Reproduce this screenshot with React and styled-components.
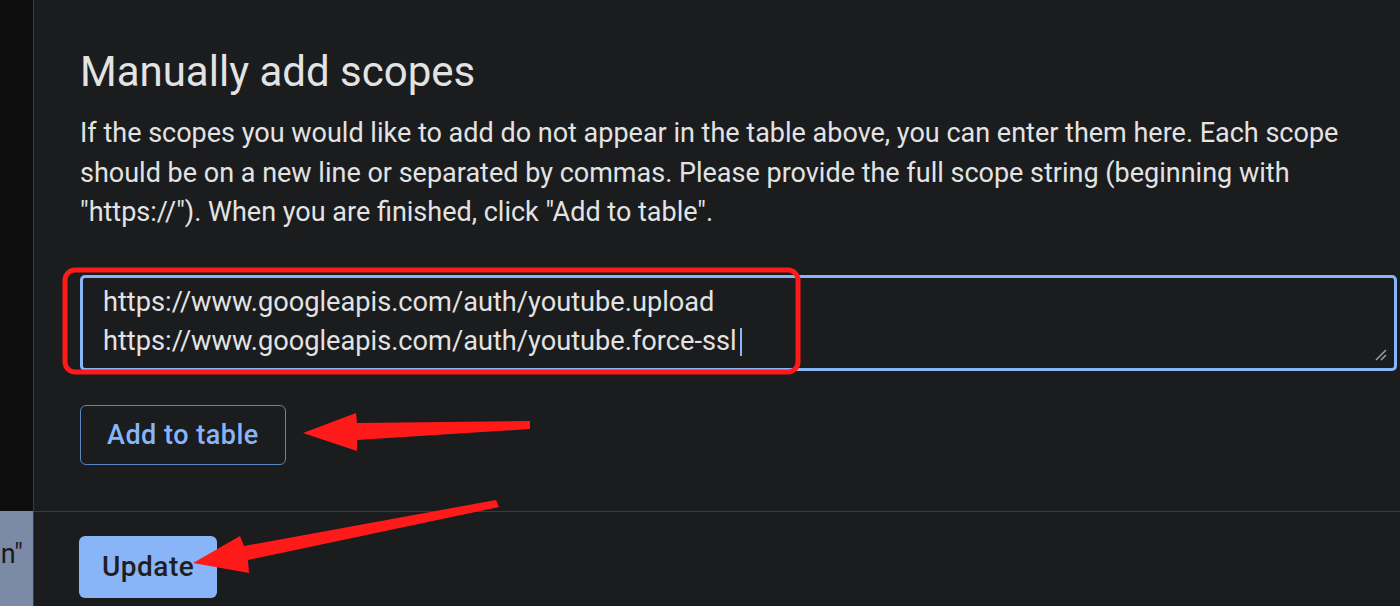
import styled, { createGlobalStyle } from "styled-components";

const Global = createGlobalStyle`
  html, body { margin: 0; padding: 0; background: #1b1c1e; }
  body { font-family: Roboto, "Noto Sans", sans-serif; }
`;

export default function App() {
  return (
    <>
      <Global />
      <Page>
        <Side>
          <SideChip>n"</SideChip>
        </Side>
        <Main>
          <Section>
            <Title>Manually add scopes</Title>
            <Text>
              If the scopes you would like to add do not appear in the table above, you can enter them here. Each scope<br />
              should be on a new line or separated by commas. Please provide the full scope string (beginning with<br />
              "https://"). When you are finished, click "Add to table".
            </Text>
            <Field>
              <Line>https://www.googleapis.com/auth/youtube.upload</Line>
              <Line>https://www.googleapis.com/auth/youtube.force-ssl<Caret /></Line>
              <Grip viewBox="0 0 12 12">
                <path d="M1 11 L11 1 M6 11 L11 6" stroke="#9aa0a6" strokeWidth="1.5" />
              </Grip>
            </Field>
            <OutlineButton>Add to table</OutlineButton>
          </Section>
          <Footer>
            <FilledButton>Update</FilledButton>
          </Footer>
        </Main>
        <Marks viewBox="0 0 1400 606">
          <rect x="65" y="270" width="733" height="102" rx="10" fill="none" stroke="#ff1a1a" strokeWidth="5" />
          <polygon fill="#ff1a1a" points="303,433 356,413 357,423 530,421 530,429 357,440 357,451" />
          <polygon fill="#ff1a1a" points="193,563 240,536 244,546 496,500 499,507 248,560 249,573" />
        </Marks>
      </Page>
    </>
  );
}

const Page = styled.div`
  position: relative;
  display: flex;
  height: 606px;
  overflow: hidden;
  background: #1b1c1e;
`;

const Side = styled.div`
  width: 33px;
  flex: none;
  display: flex;
  flex-direction: column;
  justify-content: flex-end;
  background: #0e0e0f;
  border-right: 1px solid #3a3b3d;
`;

const SideChip = styled.div`
  height: 95px;
  background: #7b8ba7;
  color: #1a1a1a;
  font-size: 27px;
  line-height: 86px;
  text-align: right;
  padding-right: 10px;
  overflow: hidden;
  white-space: nowrap;
`;

const Main = styled.div`
  flex: 1;
  display: flex;
  flex-direction: column;
`;

const Section = styled.div`
  padding: 44px 0 46px 46px;
  border-bottom: 1px solid #3a3b3d;
`;

const Title = styled.h2`
  margin: 0 0 14px;
  font-weight: 400;
  font-size: 42px;
  line-height: 56px;
  color: #e3e3e3;
`;

const Text = styled.p`
  margin: 0 0 42px;
  font-size: 27px;
  line-height: 39.5px;
  color: #e3e3e3;
  white-space: nowrap;
`;

const Field = styled.div`
  position: relative;
  margin-right: 3px;
  height: 96px;
  box-sizing: border-box;
  padding: 5px 20px;
  border: 3px solid #8ab4f8;
  border-radius: 5px;
  font-size: 27.2px;
  line-height: 39px;
  color: #e3e3e3;
`;

const Line = styled.div`
  white-space: nowrap;
`;

const Caret = styled.span`
  display: inline-block;
  width: 2px;
  height: 28px;
  margin-left: 3px;
  vertical-align: -6px;
  background: #8ab4f8;
`;

const Grip = styled.svg`
  position: absolute;
  right: 7px;
  bottom: 7px;
  width: 12px;
  height: 12px;
`;

const OutlineButton = styled.button`
  margin-top: 34px;
  height: 60px;
  padding: 0 26px;
  background: transparent;
  border: 1px solid #5c83c2;
  border-radius: 6px;
  color: #8ab4f8;
  font-family: inherit;
  font-size: 27px;
  font-weight: 500;
  letter-spacing: 0.5px;
`;

const Footer = styled.div`
  padding: 24px 0 0 45px;
`;

const FilledButton = styled.button`
  height: 62px;
  padding: 0 23px;
  background: #8ab4f8;
  border: none;
  border-radius: 6px;
  color: #1f1f1f;
  font-family: inherit;
  font-size: 28px;
  font-weight: 500;
  letter-spacing: 0.5px;
`;

const Marks = styled.svg`
  position: absolute;
  inset: 0;
  width: 1400px;
  height: 606px;
  pointer-events: none;
`;
